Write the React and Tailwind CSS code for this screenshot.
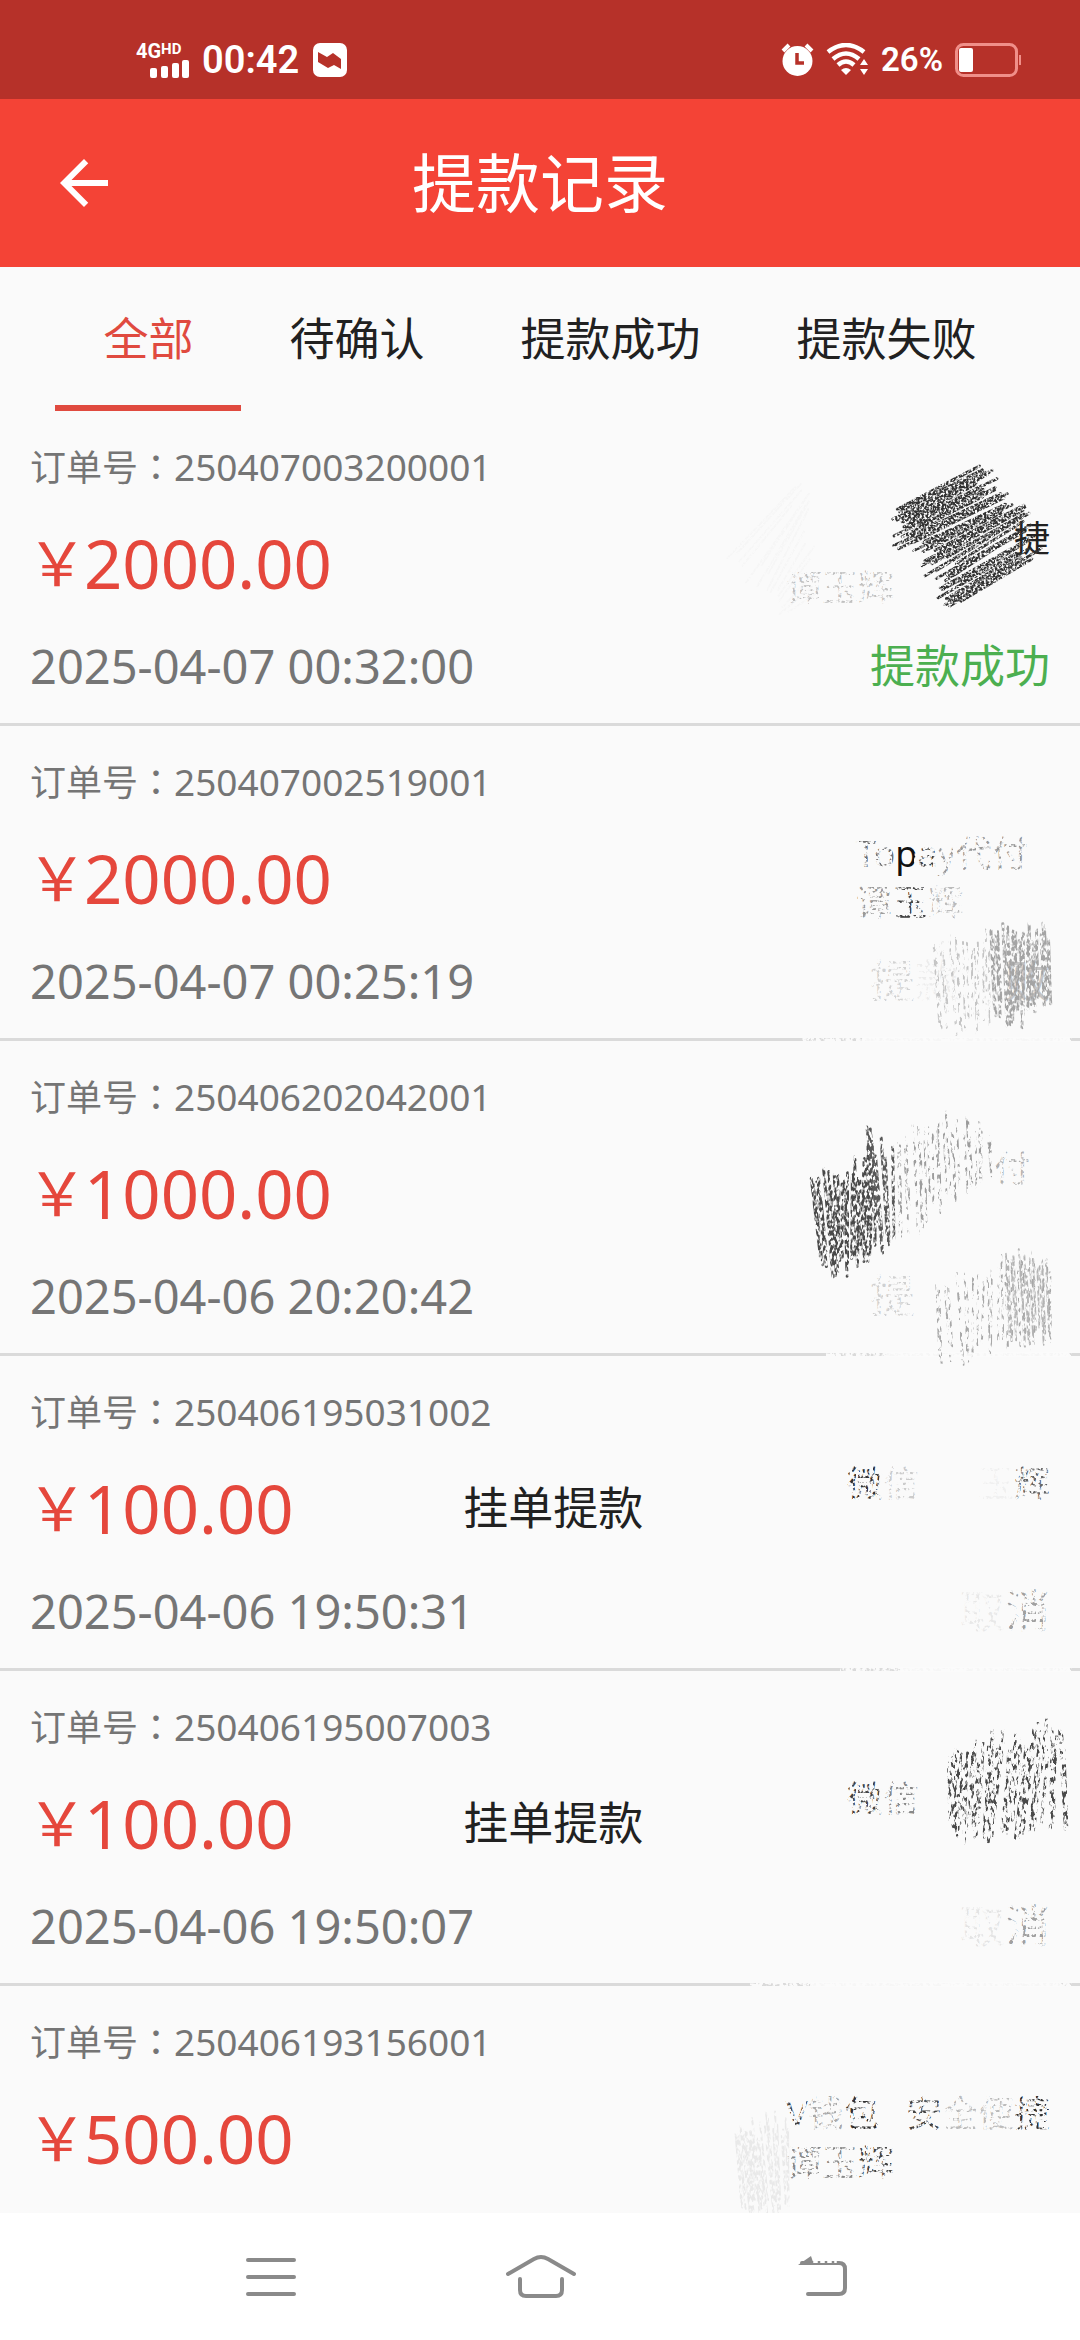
import { useState } from "react";

const TABS = ["全部", "待确认", "提款成功", "提款失败"];

// payee / status are lists of [text, className] pieces
// marks are pencil hatchings: strokes run from the "from" edge to the "to" edge
// wipes are grainy background coloured patches: [x, y, width, height]
const RECORDS = [
  {
    id: "250407003200001",
    amount: "2000.00",
    time: "2025-04-07 00:32:00",
    payee: [
      [["捷", "ml-auto text-[#212121]"]],
      [["谭玉辉", "text-[#c0c0c0]"]],
    ],
    payeeWidth: "w-[264px]",
    status: [["提款成功", "text-[#4caf50]"]],
    marks: [
      {
        from: [[193, 100], [186, 126], [198, 142], [228, 168], [244, 202]],
        to: [[285, 52], [302, 66], [320, 86], [337, 104], [342, 142]],
        count: 50,
        width: 3,
        color: "#333333",
        grain: "coarse",
      },
      {
        from: [[22, 150], [60, 190], [80, 208]],
        to: [[105, 66], [112, 90], [120, 180]],
        count: 16,
        width: 2,
        color: "#f6f6f6",
        grain: "coarse",
      },
    ],
    wipes: [[84, 158, 112, 40]],
  },
  {
    id: "250407002519001",
    amount: "2000.00",
    time: "2025-04-07 00:25:19",
    payee: [
      [
        ["To", "text-[#707070]"],
        ["p", "text-[#111]"],
        ["a", "text-[#404040]"],
        ["y代付", "text-[#999]"],
      ],
      [
        ["谭", "text-[#999]"],
        ["玉", "text-[#444]"],
        ["辉", "text-[#bbb]"],
      ],
    ],
    payeeWidth: "w-[194px]",
    status: [
      ["提", "text-[#d2d2d2]"],
      ["款", "text-[#ececec]"],
      ["败", "ml-auto text-[#c4c4c4]"],
    ],
    marks: [
      {
        from: [[290, 200], [320, 188], [348, 198]],
        to: [[295, 295], [320, 308], [352, 282]],
        count: 22,
        width: 3,
        color: "#a4a4a4",
        grain: "streak",
      },
      {
        from: [[232, 210], [290, 196]],
        to: [[240, 308], [290, 314]],
        count: 16,
        width: 2,
        color: "#c4c4c4",
        grain: "sparse",
      },
    ],
    wipes: [[154, 106, 38, 46], [214, 106, 126, 46], [154, 154, 120, 46], [168, 226, 100, 56]],
    rule: [102, 268],
  },
  {
    id: "250406202042001",
    amount: "1000.00",
    time: "2025-04-06 20:20:42",
    payee: [[["付", "ml-auto mr-5 text-[#b0b0b0]"]]],
    payeeWidth: "w-[194px]",
    status: [["提", "text-[#d0d0d0]"]],
    marks: [
      {
        from: [[110, 133], [135, 118], [165, 104], [176, 90]],
        to: [[122, 229], [140, 242], [160, 237], [175, 220]],
        count: 26,
        width: 3,
        color: "#484848",
        grain: "streak",
      },
      {
        from: [[166, 82], [167, 84], [193, 92]],
        to: [[178, 160], [180, 215], [195, 205]],
        count: 9,
        width: 3,
        color: "#585858",
        grain: "streak",
      },
      {
        from: [[197, 92], [240, 62], [290, 84]],
        to: [[200, 205], [245, 178], [292, 142]],
        count: 26,
        width: 2,
        color: "#9c9c9c",
        grain: "sparse",
      },
      {
        from: [[235, 240], [300, 208], [350, 208]],
        to: [[240, 328], [300, 320], [354, 310]],
        count: 28,
        width: 2,
        color: "#a8a8a8",
        grain: "sparse",
      },
      {
        from: [[305, 208], [345, 202]],
        to: [[310, 306], [350, 308]],
        count: 14,
        width: 2,
        color: "#b4b4b4",
        grain: "streak",
      },
    ],
    wipes: [[284, 106, 60, 46], [168, 226, 60, 56]],
    rule: [126, 242],
  },
  {
    id: "250406195031002",
    amount: "100.00",
    time: "2025-04-06 19:50:31",
    label: "挂单提款",
    payee: [
      [
        ["微", "text-[#333]"],
        ["信", "text-[#ccc]"],
        ["玉", "ml-auto text-[#f0f0f0]"],
        ["辉", "text-[#666]"],
      ],
    ],
    payeeWidth: "w-[203px]",
    status: [
      ["取", "ml-auto text-[#e8e8e8]"],
      ["消", "text-[#a0a0a0]"],
    ],
    wipes: [[146, 106, 208, 46], [256, 226, 96, 56]],
    rule: [140, 230],
  },
  {
    id: "250406195007003",
    amount: "100.00",
    time: "2025-04-06 19:50:07",
    label: "挂单提款",
    payee: [
      [
        ["微", "text-[#444]"],
        ["信", "text-[#888]"],
      ],
    ],
    payeeWidth: "w-[203px]",
    status: [
      ["取", "ml-auto text-[#e4e4e4]"],
      ["消", "text-[#a0a0a0]"],
    ],
    marks: [
      {
        from: [[248, 84], [265, 66], [300, 56], [340, 46], [363, 54]],
        to: [[250, 156], [262, 176], [290, 178], [325, 168], [368, 164]],
        count: 44,
        width: 3,
        color: "#4a4a4a",
        grain: "sparse",
      },
    ],
    wipes: [[146, 106, 76, 46], [256, 226, 96, 56]],
    rule: [50, 310],
  },
  {
    id: "250406193156001",
    amount: "500.00",
    payee: [
      [
        ["V", "text-[#444]"],
        ["钱", "text-[#aaa]"],
        ["包", "text-[#333]"],
        ["安", "ml-auto text-[#444]"],
        ["全便", "text-[#bbb]"],
        ["捷", "text-[#333]"],
      ],
      [
        ["谭玉", "text-[#888]"],
        ["辉", "text-[#444]"],
      ],
    ],
    payeeWidth: "w-[264px]",
    marks: [
      {
        from: [[35, 144], [50, 126], [88, 121]],
        to: [[42, 226], [65, 242], [90, 229]],
        count: 28,
        width: 2,
        color: "#e9e9e9",
        grain: "streak",
      },
    ],
    wipes: [[84, 106, 268, 96]],
  },
];

// point at t (0..1) along a list of points
function along(points, t) {
  const pos = t * (points.length - 1);
  const i = Math.min(Math.floor(pos), points.length - 2);
  const f = pos - i;
  return [
    points[i][0] + (points[i + 1][0] - points[i][0]) * f,
    points[i][1] + (points[i + 1][1] - points[i][1]) * f,
  ];
}

function jitter(n) {
  const v = Math.sin(n * 127.1) * 43758.5453;
  return v - Math.floor(v);
}

function hatch({ from, to, count }) {
  let d = "";
  for (let i = 0; i < count; i++) {
    const t = Math.min(1, Math.max(0, (i + jitter(i + 20) - 0.5) / (count - 1)));
    const a = along(from, t);
    const b = along(to, Math.min(1, Math.max(0, t + (jitter(i) - 0.5) * 0.08)));
    const s = jitter(i + 50) * 0.26;
    const e = 1 - jitter(i + 90) * 0.26;
    const p = [a[0] + (b[0] - a[0]) * s, a[1] + (b[1] - a[1]) * s];
    const q = [a[0] + (b[0] - a[0]) * e, a[1] + (b[1] - a[1]) * e];
    d += `M${p[0].toFixed(1)} ${p[1].toFixed(1)}L${q[0].toFixed(1)} ${q[1].toFixed(1)}`;
  }
  return d;
}

function GrainFilters() {
  return (
    <svg width="0" height="0" className="absolute" aria-hidden="true">
      <defs>
        <filter id="coarse" x="-5%" y="-5%" width="110%" height="110%">
          <feTurbulence type="fractalNoise" baseFrequency="0.45" numOctaves="2" seed="3" />
          <feColorMatrix values="0 0 0 0 0  0 0 0 0 0  0 0 0 0 0  4 0 0 0 -1.3" />
          <feComposite in="SourceGraphic" operator="in" />
        </filter>
        <filter id="wipe" x="0" y="0" width="100%" height="100%">
          <feTurbulence type="fractalNoise" baseFrequency="0.3" numOctaves="2" seed="3" />
          <feColorMatrix values="0 0 0 0 0  0 0 0 0 0  0 0 0 0 0  6 0 0 0 -2.2" />
          <feComposite in="SourceGraphic" operator="in" />
        </filter>
        <filter id="streak" x="-5%" y="-5%" width="110%" height="110%">
          <feTurbulence type="fractalNoise" baseFrequency="0.4 0.2" numOctaves="2" seed="5" />
          <feColorMatrix values="0 0 0 0 0  0 0 0 0 0  0 0 0 0 0  5 0 0 0 -1.9" />
          <feComposite in="SourceGraphic" operator="in" />
        </filter>
        <filter id="sparse" x="-5%" y="-5%" width="110%" height="110%">
          <feTurbulence type="fractalNoise" baseFrequency="0.35 0.15" numOctaves="3" seed="8" />
          <feColorMatrix values="0 0 0 0 0  0 0 0 0 0  0 0 0 0 0  7 0 0 0 -3.5" />
          <feComposite in="SourceGraphic" operator="in" />
        </filter>
      </defs>
    </svg>
  );
}

function Scribbles({ marks = [], wipes = [], rule }) {
  return (
    <svg
      viewBox="0 0 380 315"
      className="absolute top-0 right-0 w-[380px] h-[315px] overflow-visible pointer-events-none"
      aria-hidden="true"
    >
      {wipes.map(([x, y, w, h], i) => (
        <rect key={i} x={x} y={y} width={w} height={h} fill="#fafafa" filter="url(#wipe)" />
      ))}
      {rule && (
        <>
          <rect x={rule[0]} y="311" width={372 - rule[0]} height="5" fill="#fafafa" filter="url(#wipe)" />
          <rect x={rule[0] + 60} y="311" width={rule[1] - 60} height="5" fill="#fafafa" opacity="0.85" />
        </>
      )}
      {marks.map((m, i) => (
        <path
          key={i}
          d={hatch(m)}
          fill="none"
          stroke={m.color}
          strokeWidth={m.width}
          strokeLinecap="round"
          filter={`url(#${m.grain})`}
        />
      ))}
    </svg>
  );
}

function StatusBar() {
  return (
    <div className="h-[99px] shrink-0 bg-[#b63129] text-white flex items-center justify-between pl-[136px] pr-[58px] pt-5 font-[Roboto,sans-serif]">
      <div className="flex items-center">
        <div className="w-[54px] h-[36px]">
          <div className="flex items-start font-bold">
            <span className="text-[20px] leading-[18px]">4G</span>
            <span className="text-[15px] leading-[14px]">HD</span>
          </div>
          <svg width="54" height="18" viewBox="0 0 54 18" fill="white">
            <rect x="14" y="8" width="7" height="10" rx="2" />
            <rect x="25" y="6" width="7" height="12" rx="2" />
            <rect x="36" y="3" width="7" height="15" rx="2" />
            <rect x="46" y="0" width="7" height="18" rx="2" />
          </svg>
        </div>
        <span className="ml-3 text-[38px] leading-[40px] font-semibold">00:42</span>
        <svg className="ml-3.5" width="34" height="34" viewBox="0 0 34 34">
          <rect width="34" height="34" rx="7" fill="white" />
          <path d="M5 9l9 5 6-4 8 6v10l-7-4-6 3-10-6z" fill="#b63129" />
        </svg>
      </div>
      <div className="flex items-center">
        <svg className="mr-3" width="33" height="34" viewBox="0 0 33 34">
          <circle cx="16.500" cy="18" r="15" fill="white" />
          <path d="M2 8l6-6M31 8l-6-6" stroke="white" strokeWidth="4" />
          <path d="M16 10v10h7" fill="none" stroke="#b63129" strokeWidth="3.500" />
        </svg>
        <svg className="mr-3" width="43" height="34" viewBox="0 0 43 34" fill="none" stroke="white">
          <path d="M2 9Q20-5 38 9" strokeWidth="4.500" />
          <path d="M7 16Q20 5 33 16" strokeWidth="4.500" />
          <path d="M12 22Q20 15 28 22" strokeWidth="4.500" />
          <path d="M15 27q5-4 10 0l-5 5z" fill="white" stroke="none" />
          <path d="M34 22l4-6 4 6zM34 26h8l-4 6z" fill="white" stroke="none" />
        </svg>
        <span className="mr-3 text-[33px] leading-[40px] font-semibold">26%</span>
        <svg width="67" height="34" viewBox="0 0 67 34">
          <rect x="1.500" y="1.500" width="60" height="31" rx="7" fill="none" stroke="#f08f89" strokeWidth="3" />
          <rect x="4" y="5" width="14" height="24" rx="2" fill="white" />
          <rect x="64" y="12" width="2" height="10" fill="#f08f89" />
        </svg>
      </div>
    </div>
  );
}

function Pieces({ items }) {
  return items.map(([text, cls], i) => (
    <span key={i} className={cls}>
      {text}
    </span>
  ));
}

function RecordRow({ record }) {
  return (
    <li className="relative shrink-0 px-[30px] pt-[26px] pb-6 border-b-3 border-[#dadada]">
      <p className="h-14 leading-[56px] text-[37px] text-[#757575]">
        <span className="text-[36px]">订单号</span>
        <span className="text-[36px] font-['Noto_Sans_CJK_TC',sans-serif]">：</span>
        {record.id}
      </p>
      <div className="grid grid-cols-[3fr_4fr] h-[140px] items-center">
        <p className="flex items-center text-[#e5473c]">
          <span className="w-[54px] text-[60px] leading-[80px] flex justify-center">￥</span>
          <span className="text-[67px] leading-[80px]">{record.amount}</span>
        </p>
        <div className="flex items-center">
          {record.label && <span className="-ml-1 text-[45px] text-[#212121]">{record.label}</span>}
          <div className={`ml-auto h-[98px] text-[36px] leading-[49px] ${record.payeeWidth}`}>
            {record.payee.map((line, i) => (
              <p key={i} className="flex">
                <Pieces items={line} />
              </p>
            ))}
          </div>
        </div>
      </div>
      {record.time && (
        <div className="flex h-[66px] items-center justify-between leading-[66px]">
          <time className="text-[47px] text-[#757575]">{record.time}</time>
          <p className="flex w-[180px] text-[45px]">
            <Pieces items={record.status} />
          </p>
        </div>
      )}
      <Scribbles marks={record.marks} wipes={record.wipes} rule={record.rule} />
    </li>
  );
}

function NavBar() {
  return (
    <nav className="h-[127px] shrink-0 bg-white flex justify-center text-[#8a8a8a]">
      <button aria-label="菜单" className="w-1/4 flex items-center justify-center">
        <svg width="80" height="48" viewBox="0 0 80 48" fill="none" stroke="currentColor" strokeWidth="4" strokeLinecap="round">
          <path d="M18 7h46M18 24h46M18 41h46" />
        </svg>
      </button>
      <button aria-label="主页" className="w-1/4 flex items-center justify-center">
        <svg width="80" height="48" viewBox="0 0 80 48" fill="none" stroke="currentColor" strokeWidth="4" strokeLinecap="round">
          <path d="M8 21L34 6q7-4 14 0l26 15" />
          <path d="M20 26v11q0 6 6 6h30q6 0 6-6V26" />
        </svg>
      </button>
      <button aria-label="返回" className="w-1/4 flex items-center justify-center">
        <svg width="80" height="48" viewBox="0 0 80 48" fill="none" stroke="currentColor" strokeWidth="4" strokeLinecap="round">
          <path d="M32 10h37q6 0 6 6v19q0 6-6 6H38" />
          <path d="M28 12l13-9 3 9z" fill="currentColor" stroke="none" />
          <path d="M44 9h22" stroke="white" strokeWidth="2" strokeDasharray="3 4" />
        </svg>
      </button>
    </nav>
  );
}

export default function App() {
  const [active, setActive] = useState(0);

  return (
    <div className="h-screen flex flex-col bg-[#fafafa] font-['Noto_Sans','Noto_Sans_CJK_SC',sans-serif]">
      <GrainFilters />
      <StatusBar />

      {/* Title bar */}
      <header className="h-[168px] shrink-0 bg-[#f44336] text-white grid grid-cols-[1fr_auto_1fr] items-center px-12">
        <button aria-label="返回上一页" className="w-[72px]">
          <svg width="72" height="72" viewBox="0 0 24 24" fill="currentColor">
            <path d="M20 11H7.830l5.590-5.590L12 4l-8 8 8 8 1.410-1.410L7.830 13H20v-2z" />
          </svg>
        </button>
        <h1 className="text-[64px] leading-[84px]">提款记录</h1>
      </header>

      {/* Tabs */}
      <div role="tablist" className="h-36 shrink-0 flex justify-center">
        {TABS.map((tab, i) => (
          <button
            key={tab}
            role="tab"
            aria-selected={i === active}
            onClick={() => setActive(i)}
            className={`px-12 text-[45px] whitespace-nowrap border-y-6 border-t-transparent ${
              i === active ? "text-[#e04a3f] border-b-[#e04a3f]" : "text-[#212121] border-b-transparent"
            }`}
          >
            {tab}
          </button>
        ))}
      </div>

      <main className="flex-1 min-h-0 overflow-hidden">
        <ul className="flex flex-col">
          {RECORDS.map((record) => (
            <RecordRow key={record.id} record={record} />
          ))}
        </ul>
      </main>

      <NavBar />
    </div>
  );
}
